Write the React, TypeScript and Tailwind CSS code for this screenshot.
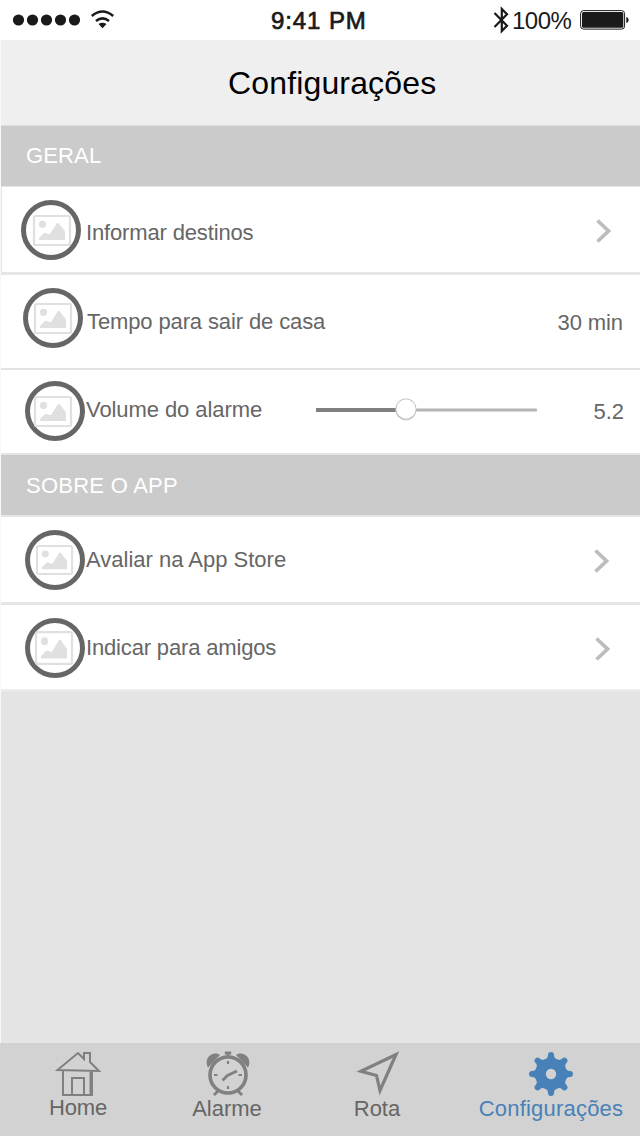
import type { ReactNode } from "react";

function PictureBadge({ x, y, w, h }: { x: number; y: number; w: number; h: number }) {
  const sx = w / 38;
  const sy = h / 31;
  return (
    <svg width="60" height="60" viewBox="0 0 60 60" className="block shrink-0">
      <circle cx="30" cy="30" r="27.5" fill="none" stroke="#666666" strokeWidth="5" />
      <g transform={`translate(${x} ${y}) scale(${sx} ${sy})`} fill="#e0e0e0">
        <rect x="1" y="1" width="36" height="29" rx="1.5" fill="none" stroke="#e0e0e0" strokeWidth="2.2" />
        <circle cx="9.5" cy="9.3" r="3.6" />
        <path d="M6 25v-2l5-5h2l2 1h2l7-11h1.5l5.5 7 1 2v8z" />
      </g>
    </svg>
  );
}

function Chevron() {
  return (
    <svg width="20" height="28" viewBox="0 0 20 28" className="block shrink-0">
      <path d="M3.5 3.5 14.5 14 3.5 24.5" fill="none" stroke="#bdbdbd" strokeWidth="3.8" />
    </svg>
  );
}

function Section({ children, className }: { children: ReactNode; className: string }) {
  return (
    <h2 className={`shrink-0 bg-[#cbcbcb] pl-[25px] text-[22px] leading-6 text-white ${className}`}>{children}</h2>
  );
}

function Tab({ label, className, labelClass, children }: { label: string; className: string; labelClass: string; children: ReactNode }) {
  return (
    <button className={`flex shrink-0 flex-col items-center pt-2 ${className}`}>
      <svg width="46" height="46" viewBox="0 0 46 46" className="block shrink-0">{children}</svg>
      <span className={`block whitespace-nowrap text-[22px] leading-6 ${labelClass}`}>{label}</span>
    </button>
  );
}

export default function App() {
  return (
    <div className="flex h-[1136px] w-[640px] flex-col overflow-hidden bg-[#e4e4e4] font-['Liberation_Sans',Arial,sans-serif] text-[#666666]">
      <div className="flex h-10 shrink-0 items-start bg-white text-[24px] leading-[26px] text-[#1a1a1a]">
        <div className="flex w-[271px] shrink-0 pl-[12px] pt-[8px]">
          <svg width="106" height="24" viewBox="0 0 106 24" fill="#1a1a1a">
            <circle cx="6.5" cy="12" r="5.6" />
            <circle cx="20.5" cy="12" r="5.6" />
            <circle cx="34.5" cy="12" r="5.6" />
            <circle cx="48.5" cy="12" r="5.6" />
            <circle cx="62.5" cy="12" r="5.6" />
            <path d="M79.8 8Q90.5-1 101.2 8M84 13Q90.5 7.6 97 13" fill="none" stroke="#1a1a1a" strokeWidth="2.6" />
            <path d="M86.5 16Q90.5 13.4 94.5 16L90.5 20.3z" />
          </svg>
        </div>
        <div className="w-[221px] shrink-0 whitespace-nowrap pt-[8px] tracking-[0.9px] [-webkit-text-stroke:0.7px_#1a1a1a]">9:41 PM</div>
        <svg width="18" height="28" viewBox="0 0 18 28" className="mt-[6px] shrink-0">
          <path d="M2.5 7 15 19.7 9.8 25V3L15 8.3 2.5 21" fill="none" stroke="#1a1a1a" strokeWidth="2.2" />
        </svg>
        <div className="w-[69px] shrink-0 whitespace-nowrap pl-0.5 pt-[8px] tracking-[-0.5px]">100%</div>
        <svg width="51" height="22" viewBox="0 0 51 22" className="mt-[9px] shrink-0">
          <rect x="1.6" y="1.6" width="44" height="18.5" rx="3" fill="#ffffff" stroke="#1a1a1a" strokeWidth="1" />
          <rect x="3" y="3" width="41.3" height="15.8" rx="1.5" fill="#1a1a1a" />
          <path d="M47.3 8c3 .5 3 5.5 0 6z" fill="#1a1a1a" />
        </svg>
      </div>

      <div className="flex h-[1003px] shrink-0 flex-col border-l border-[#f8f8f8]">
        <header className="h-[86px] shrink-0 border-b border-[#dedede] bg-[#efefef] pl-[227px] pt-[25px]">
          <h1 className="whitespace-nowrap text-[32px] leading-9 tracking-[0.15px] text-black">Configurações</h1>
        </header>

        <Section className="h-[60px] pt-[18px] tracking-[0.15px]">GERAL</Section>

        <div className="flex h-[89px] shrink-0 items-start border-b-[3px] border-l border-t border-[#e6e6e6] bg-white pl-[19px]">
          <div className="pt-[13px]"><PictureBadge x={12} y={15} w={38} h={31} /></div>
          <span className="ml-[5px] grow whitespace-nowrap pt-[34px] text-[22px] leading-6 tracking-[-0.15px]">Informar destinos</span>
          <div className="mr-[26px] pt-[30px]"><Chevron /></div>
        </div>

        <div className="flex h-[95px] shrink-0 items-start border-b-2 border-[#e4e4e4] bg-white pl-[22px]">
          <div className="pt-[13px]"><PictureBadge x={11} y={15} w={38} h={31} /></div>
          <span className="ml-[4px] grow whitespace-nowrap pt-[35px] text-[22px] leading-6 tracking-[-0.12px]">Tempo para sair de casa</span>
          <span className="mr-[17px] pt-[36px] text-[22px] leading-6 tracking-[-0.1px]">30 min</span>
        </div>

        <div className="flex h-[85px] shrink-0 items-start border-b-2 border-[#e4e4e4] bg-white pl-[24px]">
          <div className="pt-[11px]"><PictureBadge x={9} y={15} w={38} h={31} /></div>
          <span className="ml-px w-[230px] whitespace-nowrap pt-[28px] text-[22px] leading-6 tracking-[-0.08px]">Volume do alarme</span>
          <svg width="222" height="28" viewBox="0 0 222 28" className="mt-[27px] shrink-0">
            <rect x="0" y="11" width="90" height="4" fill="#808080" />
            <rect x="90" y="11.5" width="131" height="3" rx="1" fill="#b5b5b5" />
            <circle cx="90" cy="13.4" r="10.3" fill="#dedede" />
            <circle cx="90" cy="12.2" r="10.6" fill="#bdbdbd" />
            <circle cx="90" cy="12" r="9.7" fill="#ffffff" />
          </svg>
          <span className="ml-auto mr-[16px] pt-[30px] text-[22px] leading-6">5.2</span>
        </div>

        <Section className="h-[60px] pt-[19px] tracking-[0.25px]">SOBRE O APP</Section>

        <div className="flex h-[90px] shrink-0 items-start border-b-[3px] border-t-2 border-[#e6e6e6] bg-white pl-[24px]">
          <div className="pt-[13px]"><PictureBadge x={11} y={15} w={37} h={30} /></div>
          <span className="ml-px grow whitespace-nowrap pt-[31px] text-[22px] leading-6">Avaliar na App Store</span>
          <div className="mr-[28px] pt-[30px]"><Chevron /></div>
        </div>

        <div className="flex h-[86px] shrink-0 items-start border-b-2 border-[#eeeeee] bg-white pl-[24px]">
          <div className="pt-[13px]"><PictureBadge x={10} y={13} w={38} h={34} /></div>
          <span className="ml-px grow whitespace-nowrap pt-[31px] text-[22px] leading-6 tracking-[-0.16px]">Indicar para amigos</span>
          <div className="mr-[27px] pt-[30px]"><Chevron /></div>
        </div>
      </div>

      <nav className="flex h-[93px] shrink-0 bg-[#d2d2d2]">
        <Tab label="Home" className="w-[156px]" labelClass="-mt-px tracking-[-0.2px]">
          <g fill="none" stroke="#808080" strokeWidth="2">
            <path d="M2.5 19 23 2l6 6V2h6v9l9 9z" />
            <path d="M8 20v24h29V20M17 44V27h12v17M35.5 21v23" />
          </g>
        </Tab>
        <Tab label="Alarme" className="w-[142px]" labelClass="">
          <g fill="none" stroke="#808080">
            <circle cx="24" cy="24" r="18" strokeWidth="3.6" />
            <path d="M24 2v5M20.8 2h6.4M14 40l-4 4M34 40l4 4" strokeWidth="2.8" />
            <path d="M24 10v3M24 35v3M10 24h3.5M34.5 24H38" strokeWidth="2.2" />
            <path d="M18.5 29.5l5-5 9.5-4.5" strokeWidth="2.8" />
          </g>
          <path d="M4 16.5C-1 7 9 -1 16 4z M32 4C39-1 49 7 44 16.5z" fill="#808080" />
        </Tab>
        <Tab label="Rota" className="w-[158px]" labelClass="">
          <path d="M7 20.3 42 3.5 26 39.5 22.5 24.5z" fill="none" stroke="#808080" strokeWidth="3.2" />
        </Tab>
        <Tab label="Configurações" className="w-[190px] text-[#4881b8]" labelClass="tracking-[0.2px]">
          <g fill="#4881b8">
            {[0, 45, 90, 135, 180, 225, 270, 315].map((angle) => (
              <path
                key={angle}
                d="M15.5 9Q20 7.8 20 4Q20 1 23 1T26 4Q26 7.8 30.5 9L27 20h-8z"
                transform={`rotate(${angle} 23 23)`}
              />
            ))}
            <circle cx="23" cy="23" r="15.5" />
          </g>
          <circle cx="23" cy="23" r="5.2" fill="#d2d2d2" />
        </Tab>
      </nav>
    </div>
  );
}
